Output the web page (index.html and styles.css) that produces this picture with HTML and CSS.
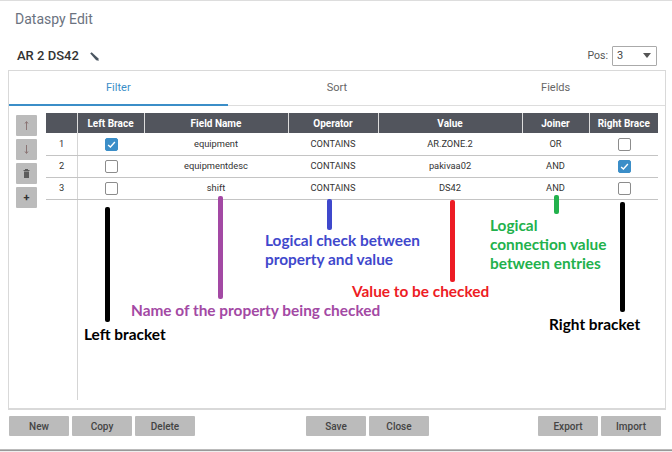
FILE: index.html
```html
<!DOCTYPE html>
<html lang="en">
<head>
    <meta charset="UTF-8">
    <meta name="viewport" content="width=device-width, initial-scale=1.0">
    <title>Dataspy Edit</title>
    <link rel="stylesheet" href="styles.css">
</head>
<body>
    <div class="dialog">
        <h1 class="title">Dataspy Edit</h1>
        <div class="name-row">
            <span class="ds-name">AR 2 DS42</span>
            <svg class="pencil" width="9" height="9" viewBox="0 0 9 9">
                <path d="M0.2 1.6 L1.6 0.2 L8.2 6.2 L8.8 8.8 L6.2 8.2 Z" fill="#4a5560"/>
            </svg>
            <span class="pos-label">Pos:</span>
            <div class="pos-select">
                <span>3</span>
                <span class="caret"></span>
            </div>
        </div>

        <div class="panel">
            <div class="tabs">
                <div class="tab active">Filter</div>
                <div class="tab">Sort</div>
                <div class="tab">Fields</div>
            </div>
            <div class="content">
                <div class="side-buttons">
                    <button class="side-btn">
                        <svg width="5" height="9" viewBox="0 0 5 9">
                            <path d="M2.5 9V1 M1 2.5L2.5 0.5L4 2.5" fill="none" stroke="#8a7474" stroke-width="1"/>
                        </svg>
                    </button>
                    <button class="side-btn">
                        <svg width="5" height="9" viewBox="0 0 5 9">
                            <path d="M2.5 0V8 M1 6.5L2.5 8.5L4 6.5" fill="none" stroke="#8a7474" stroke-width="1"/>
                        </svg>
                    </button>
                    <button class="side-btn">
                        <svg width="7" height="9" viewBox="0 0 7 9">
                            <path d="M0.5 1h6v1h-6z M2 0h3v1H2z M1 2.5h5V9H1z" fill="#5c5c5c"/>
                        </svg>
                    </button>
                    <button class="side-btn plus">+</button>
                </div>
                <div class="grid-wrap">
                    <div class="num-line"></div>
                    <table class="grid">
                        <colgroup>
                            <col class="c-num"><col class="c-brace"><col class="c-field"><col class="c-op">
                            <col class="c-value"><col class="c-joiner"><col class="c-rbrace">
                        </colgroup>
                        <thead>
                            <tr>
                                <th></th>
                                <th>Left Brace</th>
                                <th>Field Name</th>
                                <th>Operator</th>
                                <th>Value</th>
                                <th>Joiner</th>
                                <th>Right Brace</th>
                            </tr>
                        </thead>
                        <tbody>
                            <tr>
                                <td>1</td>
                                <td><span class="check on"><svg width="13" height="13" viewBox="0 0 13 13"><path d="M2.5 7 L5.2 9.5 L10.5 3.5" fill="none" stroke="#fff" stroke-width="1.6"/></svg></span></td>
                                <td>equipment</td>
                                <td>CONTAINS</td>
                                <td>AR.ZONE.2</td>
                                <td>OR</td>
                                <td><span class="check"></span></td>
                            </tr>
                            <tr>
                                <td>2</td>
                                <td><span class="check"></span></td>
                                <td>equipmentdesc</td>
                                <td>CONTAINS</td>
                                <td>pakivaa02</td>
                                <td>AND</td>
                                <td><span class="check on"><svg width="13" height="13" viewBox="0 0 13 13"><path d="M2.5 7 L5.2 9.5 L10.5 3.5" fill="none" stroke="#fff" stroke-width="1.6"/></svg></span></td>
                            </tr>
                            <tr>
                                <td>3</td>
                                <td><span class="check"></span></td>
                                <td>shift</td>
                                <td>CONTAINS</td>
                                <td>DS42</td>
                                <td>AND</td>
                                <td><span class="check"></span></td>
                            </tr>
                        </tbody>
                    </table>
                </div>
            </div>
        </div>

        <div class="footer">
            <div class="btn-group">
                <button class="btn">New</button>
                <button class="btn">Copy</button>
                <button class="btn">Delete</button>
            </div>
            <div class="btn-group btn-group-mid">
                <button class="btn">Save</button>
                <button class="btn">Close</button>
            </div>
            <div class="btn-group">
                <button class="btn">Export</button>
                <button class="btn">Import</button>
            </div>
        </div>
    </div>

    <!-- notes painted over the screenshot -->
    <div class="bar bar-left"></div>
    <div class="bar bar-field"></div>
    <div class="bar bar-op"></div>
    <div class="bar bar-value"></div>
    <div class="bar bar-joiner"></div>
    <div class="bar bar-right"></div>
    <div class="note note-left">Left bracket</div>
    <div class="note note-field">Name of the property being checked</div>
    <div class="note note-op">Logical check between<br>property and value</div>
    <div class="note note-value">Value to be checked</div>
    <div class="note note-joiner">Logical<br>connection value<br>between entries</div>
    <div class="note note-right">Right bracket</div>
</body>
</html>
```

FILE: styles.css
```css
* {
    box-sizing: border-box;
}
html, body {
    margin: 0;
    height: 452px;
    overflow: hidden;
}
body {
    position: relative;
    font-family: Roboto, "Liberation Sans", Arial, sans-serif;
    background-color: #fff;
}
.dialog {
    height: 450px;
    border-top: 1px solid #ddd;
    border-bottom: 1px solid #bbb;
    box-shadow: 0 1px 1px #999;
    padding: 0 6px 0 8px;
    display: flex;
    flex-direction: column;
}
.title {
    margin: 0;
    padding: 10px 0 0 7px;
    height: 40px;
    font-size: 14px;
    line-height: 17px;
    font-weight: 400;
    color: #6b7280;
}
.name-row {
    display: flex;
    align-items: center;
    height: 29px;
    padding: 0 9px 0 9px;
}
.ds-name {
    font-size: 13px;
    font-weight: 500;
    color: #333;
}
.pencil {
    margin: 2px 0 0 11px;
}
.pos-label {
    margin-left: auto;
    margin-right: 4px;
    font-size: 10.5px;
    color: #555;
}
.pos-select {
    width: 45px;
    height: 20px;
    border: 1px solid #aaa;
    border-radius: 1px;
    padding: 0 5px 0 4px;
    display: flex;
    align-items: center;
    justify-content: space-between;
    font-size: 11px;
    color: #444;
}
.caret {
    border-left: 4px solid transparent;
    border-right: 4px solid transparent;
    border-top: 5px solid #555;
}
.panel {
    height: 340px;
    border: 1px solid #d9d9d9;
    border-bottom-width: 2px;
    display: flex;
    flex-direction: column;
}
.tabs {
    display: flex;
    height: 35px;
    border-bottom: 1px solid #ddd;
}
.tab {
    width: 219px;
    text-align: center;
    font-size: 11px;
    line-height: 33px;
    color: #666;
}
.tab.active {
    color: #3b8ec8;
    border-bottom: 2px solid #3b8ec8;
    height: 35px;
}
.content {
    flex: 1;
    display: flex;
    padding: 7px 6px 0 7px;
}
.side-buttons {
    width: 30px;
    padding-top: 2px;
    display: flex;
    flex-direction: column;
    gap: 3px;
}
.side-btn {
    width: 21px;
    height: 21px;
    padding: 0;
    border: none;
    border-radius: 1px;
    background-color: #bbb;
    font-size: 11px;
    color: #555;
    font-family: inherit;
    display: flex;
    align-items: center;
    justify-content: center;
}
.side-btn.plus {
    font-weight: 700;
    color: #333;
}
.grid-wrap {
    position: relative;
    width: 612px;
    padding-bottom: 8px;
}
.num-line {
    position: absolute;
    left: 31px;
    top: 0;
    bottom: 8px;
    width: 1px;
    background-color: #d5d5d5;
}
.grid {
    position: relative;
    width: 612px;
    table-layout: fixed;
    border-collapse: collapse;
    font-size: 9.3px;
}
.c-num { width: 31px; }
.c-brace { width: 67px; }
.c-field { width: 144px; }
.c-op { width: 90px; }
.c-value { width: 144px; }
.c-joiner { width: 67px; }
.c-rbrace { width: 69px; }
.grid th {
    height: 20px;
    padding: 0;
    background-color: #52555d;
    color: #fff;
    font-size: 10px;
    font-weight: 700;
    text-align: center;
    border-left: 1px solid #ddd;
}
.grid th:first-child {
    border-left: none;
}
.grid td {
    height: 22px;
    padding: 0 0 1px;
    text-align: center;
    color: #333;
    border-bottom: 1px solid #c4c4c4;
}
.check {
    display: inline-flex;
    align-items: center;
    justify-content: center;
    width: 13px;
    height: 13px;
    margin: 2px 0 0 1px;
    vertical-align: middle;
    border: 1px solid #8c8c8c;
    border-radius: 2px;
    background-color: #fff;
}
.check.on {
    border-color: #3b8ec8;
    background-color: #3b8ec8;
}
.footer {
    display: flex;
    justify-content: space-between;
    padding: 6px 5px 0 1px;
}
.btn-group {
    display: flex;
    gap: 3px;
}
.btn-group-mid {
    margin-left: 2px;
}
.btn {
    width: 60px;
    height: 20px;
    padding: 0;
    border: none;
    border-radius: 1px;
    background-color: #bbb;
    font-family: inherit;
    font-size: 10px;
    font-weight: 500;
    color: #444;
}
.bar {
    position: absolute;
    width: 5px;
    border-radius: 2px;
}
.bar-left { left: 105px; top: 207px; height: 115px; background-color: #000; }
.bar-field { left: 218px; top: 196px; height: 103px; background-color: #a349a4; }
.bar-op { left: 327px; top: 199px; height: 31px; background-color: #3f48cc; }
.bar-value { left: 450px; top: 200px; height: 82px; background-color: #ed1c24; }
.bar-joiner { left: 554px; top: 195px; height: 19px; background-color: #22b14c; }
.bar-right { left: 620px; top: 202px; height: 110px; background-color: #000; }
.note {
    position: absolute;
    font-family: Lato, "Open Sans", sans-serif;
    font-size: 15.4px;
    font-weight: 700;
    line-height: 19px;
    white-space: nowrap;
}
.note-left { left: 84px; top: 325px; color: #000; }
.note-field { left: 131px; top: 301px; color: #a349a4; }
.note-op { left: 265px; top: 231px; color: #3f48cc; }
.note-value { left: 352px; top: 282px; color: #ed1c24; }
.note-joiner { left: 490px; top: 216px; color: #22b14c; }
.note-right { left: 549px; top: 315px; color: #000; }
```
